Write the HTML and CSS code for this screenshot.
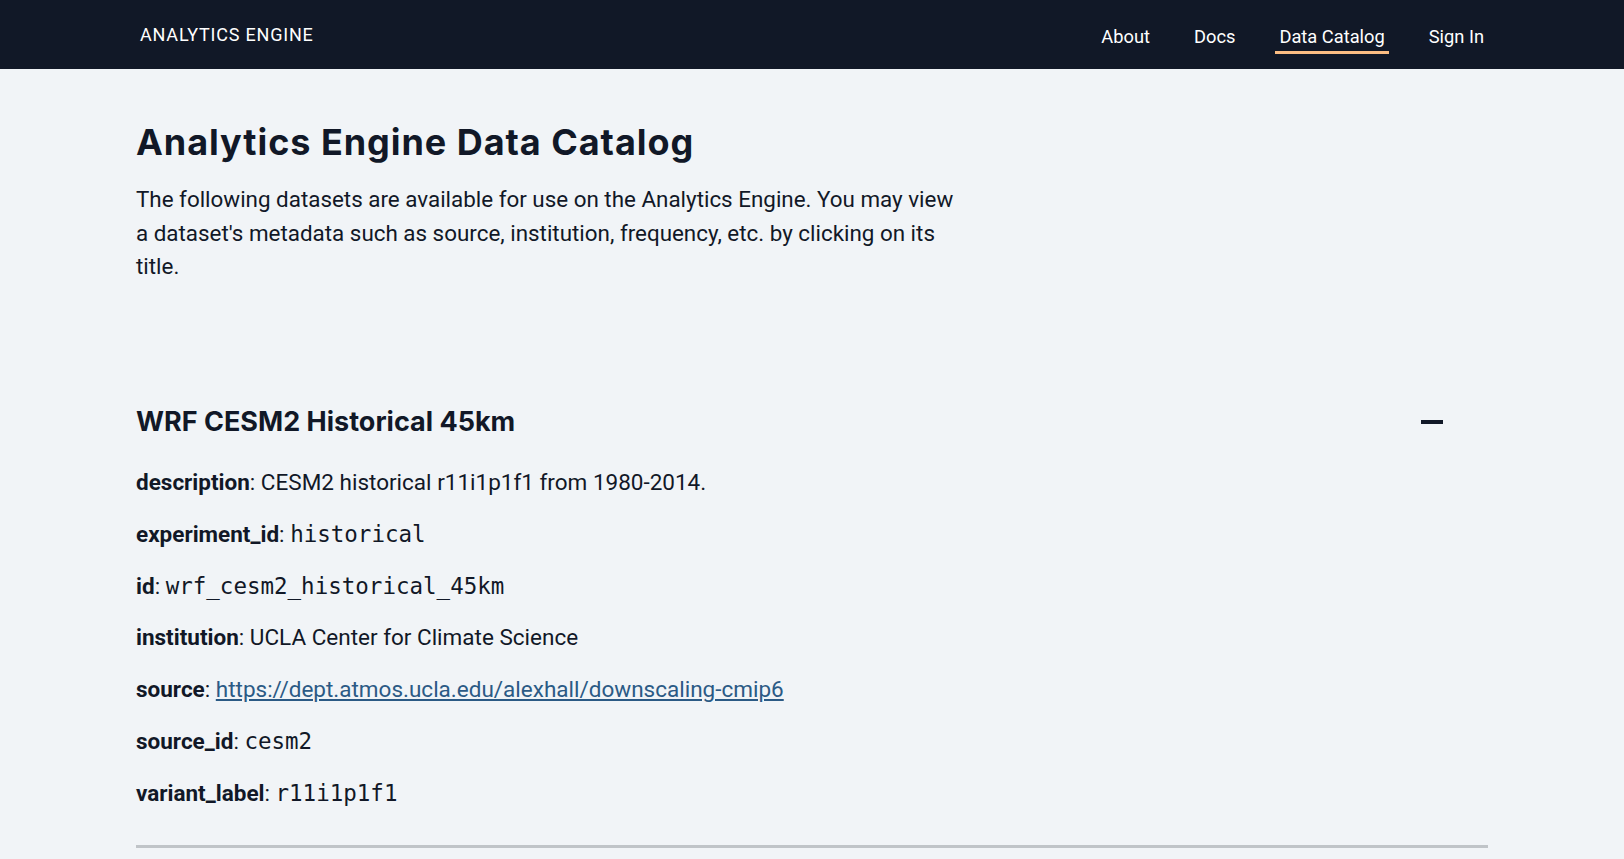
FILE: index.html
```html
<!DOCTYPE html>
<html lang="en">
<head>
<meta charset="utf-8">
<title>Analytics Engine Data Catalog</title>
<link rel="stylesheet" href="styles.css">
</head>
<body>
<header class="topbar">
  <div class="topbar-inner">
    <a class="brand" href="#">ANALYTICS ENGINE</a>
    <nav class="nav">
      <a class="nav-link" href="#">About</a>
      <a class="nav-link" href="#">Docs</a>
      <a class="nav-link is-active" href="#">Data Catalog</a>
      <a class="nav-link" href="#">Sign In</a>
    </nav>
  </div>
</header>
<main class="container">
  <h1 class="page-title">Analytics Engine Data Catalog</h1>
  <p class="intro">The following datasets are available for use on the Analytics Engine. You may view a dataset's metadata such as source, institution, frequency, etc. by clicking on its title.</p>

  <section class="dataset">
    <div class="dataset-head">
      <h2 class="dataset-title">WRF CESM2 Historical 45km</h2>
      <button class="toggle" type="button" aria-label="Collapse"><span class="minus"></span></button>
    </div>
    <div class="meta">
      <p class="meta-row"><strong>description</strong>: CESM2 historical r11i1p1f1 from 1980-2014.</p>
      <p class="meta-row"><strong>experiment_id</strong>: <code>historical</code></p>
      <p class="meta-row"><strong>id</strong>: <code>wrf_cesm2_historical_45km</code></p>
      <p class="meta-row"><strong>institution</strong>: UCLA Center for Climate Science</p>
      <p class="meta-row"><strong>source</strong>: <a class="link" href="#">https://dept.atmos.ucla.edu/alexhall/downscaling-cmip6</a></p>
      <p class="meta-row"><strong>source_id</strong>: <code>cesm2</code></p>
      <p class="meta-row"><strong>variant_label</strong>: <code>r11i1p1f1</code></p>
    </div>
    <hr class="divider">
  </section>
</main>
</body>
</html>
```

FILE: styles.css
```css
* { box-sizing: border-box; }

html, body {
  margin: 0;
  padding: 0;
}

body {
  background: #f1f4f7;
  color: #111827;
  font-family: Roboto, "Liberation Sans", sans-serif;
}

.topbar {
  background: #111827;
  height: 69px;
}

.topbar-inner {
  max-width: 1400px;
  margin: 0 auto;
  padding: 0 24px;
  height: 100%;
  display: flex;
  align-items: center;
  justify-content: space-between;
}

.brand {
  color: #ffffff;
  text-decoration: none;
  font-size: 18px;
  letter-spacing: 0.8px;
  padding-left: 4px;
  margin-top: -1px;
}

.nav {
  display: flex;
  align-items: center;
  gap: 36px;
}

.nav-link {
  color: #ffffff;
  text-decoration: none;
  font-size: 18.3px;
  padding: 6px 4px 4px;
  border-bottom: 3px solid transparent;
  margin-top: 4px;
}

.nav-link.is-active {
  border-bottom-color: #fbbd83;
}

.container {
  max-width: 1400px;
  margin: 0 auto;
  padding: 0 24px;
}

.page-title {
  font-family: Inter, "Open Sans", sans-serif;
  font-weight: 700;
  font-size: 36px;
  line-height: 1.2;
  margin: 52px 0 0;
  letter-spacing: 0.95px;
}

.intro {
  font-size: 22.4px;
  line-height: 33.6px;
  max-width: 830px;
  margin: 19px 0 0;
}

.dataset {
  margin-top: 120px;
}

.dataset-head {
  display: flex;
  align-items: center;
  justify-content: space-between;
}

.dataset-title {
  font-family: Inter, "Open Sans", sans-serif;
  font-weight: 700;
  font-size: 27px;
  line-height: 1.3;
  margin: 0;
}

.toggle {
  background: none;
  border: 0;
  padding: 10px 0;
  margin-right: 45px;
  cursor: pointer;
  display: flex;
}

.minus {
  display: block;
  width: 22px;
  height: 4px;
  background: #111827;
}

.meta {
  margin-top: 27px;
}

.meta-row {
  font-size: 22.5px;
  line-height: 32px;
  margin: 0 0 19.8px;
}

.meta-row strong {
  font-weight: 700;
}

code {
  font-family: "DejaVu Sans Mono", "Liberation Mono", monospace;
  font-size: 22.5px;
}

.link {
  color: #2b5a85;
  text-decoration: underline;
}

.divider {
  border: 0;
  height: 3px;
  background: #c0c4c8;
  margin: 36px 0 0;
}
```
